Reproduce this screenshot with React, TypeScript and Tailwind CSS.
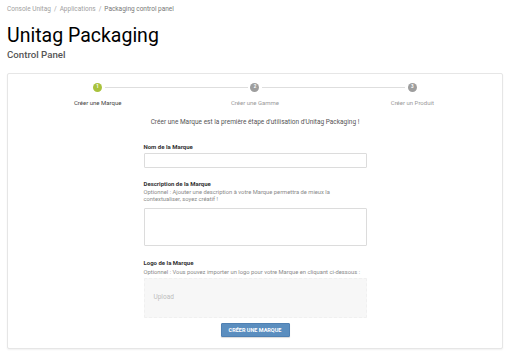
import React from 'react';

const steps = [
  { n: 1, label: 'Créer une Marque', active: true },
  { n: 2, label: 'Créer une Gamme', active: false },
  { n: 3, label: 'Créer un Produit', active: false },
];

const Stepper: React.FC = () => (
  <div className="grid grid-cols-3 px-[11px]">
    {steps.map((s, i) => (
      <div key={s.n} className="flex flex-col items-center">
        <div className="relative flex h-[9px] w-full justify-center">
          {i < steps.length - 1 && (
            <div className="absolute left-[calc(50%+7px)] right-[calc(-50%+7px)] top-[4px] h-px bg-[#dedede]" />
          )}
          <div
            className={
              s.active
                ? 'flex h-[9px] w-[9px] items-center justify-center rounded-full bg-[#a9c23c] text-[4.5px] font-bold leading-none text-white'
                : 'flex h-[9px] w-[9px] items-center justify-center rounded-full bg-[#9e9e9e] text-[4.5px] font-bold leading-none text-white'
            }
          >
            {s.n}
          </div>
        </div>
        <div
          className={
            s.active
              ? 'mt-[7px] text-[6px] leading-[8px] text-[#444]'
              : 'mt-[7px] text-[6px] leading-[8px] text-[#9a9a9a]'
          }
        >
          {s.label}
        </div>
      </div>
    ))}
  </div>
);

export default function App() {
  return (
    <div className="min-h-screen bg-white font-['Roboto',sans-serif]">
      <div className="px-[7px] pt-[5px]">
        <div className="flex items-center gap-[3px] text-[6.5px] leading-[8px] text-[#a0a0a0]">
          <span>Console Unitag</span>
          <span>/</span>
          <span>Applications</span>
          <span>/</span>
          <span className="text-[#777]">Packaging control panel</span>
        </div>
        <h1 className="mt-[11px] text-[19.5px] leading-[24px] text-black">Unitag Packaging</h1>
        <div className="mt-[1px] text-[9.7px] font-medium leading-[12px] text-[#555]">Control Panel</div>
      </div>

      <div className="mx-[7px] mt-[12px] w-[496px] rounded-[2px] border border-[#e6e6e6] bg-white pb-[11px] pt-[9px] shadow-[0_1px_2px_rgba(0,0,0,0.06)]">
        <Stepper />

        <p className="mt-[11px] text-center text-[6.5px] leading-[8px] text-[#555]">
          Créer une Marque est la première étape d'utilisation d'Unitag Packaging !
        </p>

        <div className="mx-auto mt-[17px] flex w-[223px] flex-col">
          <label className="text-[6px] font-bold leading-[8px] text-[#333]">Nom de la Marque</label>
          <div className="mt-[2px] h-[15px] rounded-[1px] border border-[#dcdcdc] bg-white" />

          <label className="mt-[12px] text-[6px] font-bold leading-[8px] text-[#333]">Description de la Marque</label>
          <p className="mt-[1px] text-[5.8px] leading-[7px] text-[#8a8a8a]">
            Optionnel : Ajouter une description à votre Marque permettra de mieux la contextualiser, soyez créatif !
          </p>
          <div className="mt-[5px] h-[38px] rounded-[1px] border border-[#dcdcdc] bg-white" />

          <label className="mt-[13px] text-[6px] font-bold leading-[8px] text-[#333]">Logo de la Marque</label>
          <p className="mt-[2px] text-[5.8px] leading-[7px] text-[#8a8a8a]">
            Optionnel : Vous pouvez importer un logo pour votre Marque en cliquant ci-dessous :
          </p>
          <div className="mt-[2px] flex h-[40px] items-center rounded-[1px] border border-dashed border-[#f0f0f0] bg-[#f7f7f7] px-[9px]">
            <span className="text-[6.5px] text-[#bdbdbd]">Upload</span>
          </div>

          <div className="mt-[5px] flex justify-center">
            <button className="flex h-[14px] w-[69px] items-center justify-center rounded-[1px] border border-[#4f80b2] bg-[#5b8ebf] text-[5.5px] font-bold text-white shadow-[0_1px_1px_rgba(0,0,0,0.15)]">
              CRÉER UNE MARQUE
            </button>
          </div>
        </div>
      </div>
    </div>
  );
}
